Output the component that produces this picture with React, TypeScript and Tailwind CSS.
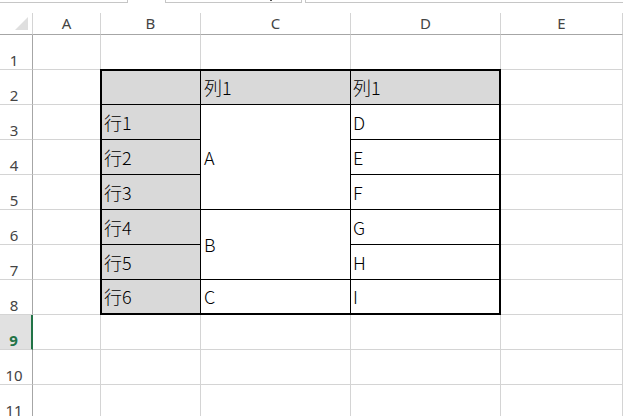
import React from "react";

const colLetters = ["A", "B", "C", "D", "E"];
const sheetRows = [1, 2, 3, 4, 5, 6, 7, 8, 9, 10, 11];

// cell text in Japanese, MS PGothic-ish fallback
const jp = "font-['Noto_Sans_CJK_JP','Noto_Sans',sans-serif] font-light";

const RowHeader: React.FC<{ n: number }> = ({ n }) => {
    if (n === 9) {
        return (
            <div className="flex items-end justify-center pr-[4px] pb-[1px] bg-[#e1e1e1] border-r-2 border-b border-r-[#217346] border-b-[#d4d4d4] text-[15px] leading-none font-bold text-[#217346]">
                {n}
            </div>
        );
    }
    return (
        <div className="flex items-end justify-center pr-[4px] pb-[1px] border-r border-b border-r-[#a6a6a6] border-b-[#d4d4d4] text-[15px] leading-none text-[#444]">
            {n}
        </div>
    );
};

const Cell: React.FC = () => <div className="border-r border-b border-[#d4d4d4]" />;

export default function App() {
    return (
        <div className="w-[623px] h-[416px] overflow-hidden bg-white font-['Noto_Sans',sans-serif]">
            {/* formula bar remains */}
            <div className="h-[13px] flex items-start">
                <div className="w-[128px] h-[3px] border-r border-b border-[#c6c6c6]" />
                <div className="ml-[37px] w-[137px] h-[3px] border-l border-r border-b border-[#c6c6c6] flex justify-end pr-[29px]">
                    <div className="w-[2px] h-[1px] bg-[#555]" />
                </div>
                <div className="ml-[3px] flex-1 h-[3px] border-l border-b border-[#c6c6c6]" />
            </div>

            <div className="grid grid-cols-[33px_68px_100px_150px_150px_1fr] grid-rows-[22px_repeat(11,35px)]">
                {/* corner */}
                <div className="flex items-end justify-end pr-[4px] pb-[4px] border-r border-b border-r-[#d4d4d4] border-b-[#a6a6a6]">
                    <svg width="13" height="13" viewBox="0 0 13 13">
                        <polygon points="13,0 13,13 0,13" fill="#dfdfdf" />
                    </svg>
                </div>
                {colLetters.map((c) => (
                    <div
                        key={c}
                        className="flex items-center justify-center border-r border-b border-r-[#d4d4d4] border-b-[#a6a6a6] text-[15px] text-[#444]"
                    >
                        {c}
                    </div>
                ))}

                {sheetRows.map((n) =>
                    n >= 2 && n <= 8 ? (
                        <React.Fragment key={n}>
                            <RowHeader n={n} />
                            <Cell />
                            <Cell />
                        </React.Fragment>
                    ) : (
                        <React.Fragment key={n}>
                            <RowHeader n={n} />
                            <Cell />
                            <Cell />
                            <Cell />
                            <Cell />
                            <Cell />
                        </React.Fragment>
                    )
                )}

                {/* bordered table B2:D8 */}
                <div className={`col-start-3 col-span-3 row-start-3 row-span-7 -ml-px -mt-px z-10 bg-white border-2 border-black grid grid-cols-[99px_150px_1fr] grid-rows-[34px_repeat(5,35px)_1fr] text-[18px] text-black ${jp}`}>
                    <div className="col-start-1 row-start-1 bg-[#d9d9d9] border-r border-b border-black" />
                    <div className="col-start-2 row-start-1 bg-[#d9d9d9] border-r border-b border-black flex items-center pl-[3px]">列1</div>
                    <div className="col-start-3 row-start-1 bg-[#d9d9d9] border-b border-black flex items-center pl-[2px]">列1</div>

                    <div className="col-start-1 row-start-2 bg-[#d9d9d9] border-r border-b border-black flex items-center pl-[2px]">行1</div>
                    <div className="col-start-1 row-start-3 bg-[#d9d9d9] border-r border-b border-black flex items-center pl-[2px]">行2</div>
                    <div className="col-start-1 row-start-4 bg-[#d9d9d9] border-r border-b border-black flex items-center pl-[2px]">行3</div>
                    <div className="col-start-1 row-start-5 bg-[#d9d9d9] border-r border-b border-black flex items-center pl-[2px]">行4</div>
                    <div className="col-start-1 row-start-6 bg-[#d9d9d9] border-r border-b border-black flex items-center pl-[2px]">行5</div>
                    <div className="col-start-1 row-start-7 bg-[#d9d9d9] border-r border-black flex items-center pl-[2px]">行6</div>

                    <div className="col-start-2 row-start-2 row-span-3 border-r border-b border-black flex items-center pl-[3px]">A</div>
                    <div className="col-start-2 row-start-5 row-span-2 border-r border-b border-black flex items-center pl-[3px]">B</div>
                    <div className="col-start-2 row-start-7 border-r border-black flex items-center pl-[3px]">C</div>

                    <div className="col-start-3 row-start-2 border-b border-black flex items-center pl-[2px]">D</div>
                    <div className="col-start-3 row-start-3 border-b border-black flex items-center pl-[2px]">E</div>
                    <div className="col-start-3 row-start-4 border-b border-black flex items-center pl-[2px]">F</div>
                    <div className="col-start-3 row-start-5 border-b border-black flex items-center pl-[2px]">G</div>
                    <div className="col-start-3 row-start-6 border-b border-black flex items-center pl-[2px]">H</div>
                    <div className="col-start-3 row-start-7 flex items-center pl-[2px]">I</div>
                </div>
            </div>
        </div>
    );
}
